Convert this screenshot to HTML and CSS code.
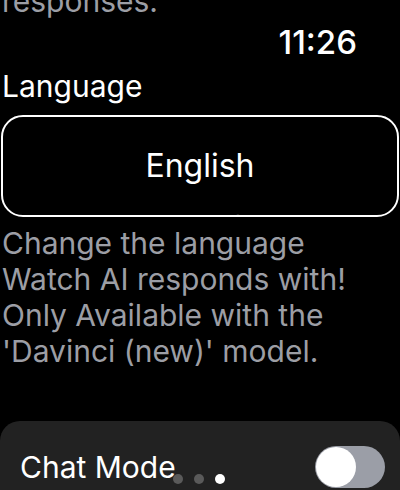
FILE: index.html
```html
<!DOCTYPE html>
<html>
<head>
<meta charset="utf-8">
<link rel="stylesheet" href="styles.css">
</head>
<body>
<div class="screen">
  <div class="prev">responses.</div>
  <div class="status"><span class="time">11:26</span></div>
  <div class="label">Language</div>
  <div class="picker">
    <div class="wheel-item faint top">Afrikaans</div>
    <div class="wheel-item current">English</div>
    <div class="wheel-item faint bottom">Français</div>
  </div>
  <div class="desc">Change the language Watch AI responds with! Only Available with the 'Davinci (new)' model.</div>
  <div class="card">
    <span class="card-label">Chat Mode</span>
    <span class="toggle"><span class="knob"></span></span>
  </div>
  <div class="dots">
    <span class="dot"></span><span class="dot"></span><span class="dot active"></span>
  </div>
</div>
</body>
</html>
```
FILE: styles.css
```css
html, body {
  margin: 0;
  padding: 0;
  background: #000;
}
.screen {
  position: relative;
  width: 400px;
  height: 490px;
  overflow: hidden;
  font-family: Inter, "Noto Sans", sans-serif;
  color: #fff;
}
.prev {
  margin-top: -16px;
  padding-left: 2px;
  font-size: 30px;
  line-height: 34px;
  color: #9c9ea5;
}
.status {
  display: flex;
  justify-content: flex-end;
  padding-right: 43px;
  margin-top: 6px;
}
.time {
  font-size: 33px;
  line-height: 36px;
  font-weight: 500;
}
.label {
  padding-left: 2px;
  margin-top: 8px;
  font-size: 30px;
  line-height: 36px;
}
.picker {
  position: relative;
  margin: 11px 1px 0;
  height: 98px;
  border: 2px solid #fff;
  border-radius: 22px;
  display: flex;
  align-items: center;
  justify-content: center;
  overflow: hidden;
}
.current {
  font-size: 32px;
  line-height: 38px;
}
.faint {
  position: absolute;
  left: 0;
  right: 0;
  text-align: center;
  color: #333;
  font-size: 28px;
  line-height: 34px;
}
.faint.top { top: -28px; }
.faint.bottom { bottom: -28px; }
.desc {
  margin-top: 8px;
  padding-left: 2px;
  padding-right: 40px;
  font-size: 30px;
  line-height: 36px;
  color: #9c9ea5;
}
.card {
  margin-top: 52px;
  height: 90px;
  background: #222222;
  border-radius: 20px;
  display: flex;
  align-items: flex-start;
  justify-content: space-between;
  padding: 24px 15px 0 20px;
  box-sizing: border-box;
}
.card-label {
  font-size: 30px;
  line-height: 44px;
}
.toggle {
  margin-top: 1px;
  width: 70px;
  height: 42px;
  border-radius: 21px;
  background: #9b9ea7;
  display: flex;
  align-items: center;
  padding-left: 1px;
  box-sizing: border-box;
}
.knob {
  width: 40px;
  height: 40px;
  border-radius: 50%;
  background: #fff;
}
.dots {
  position: absolute;
  left: 173px;
  top: 474px;
  display: flex;
  gap: 11px;
}
.dot {
  width: 10px;
  height: 10px;
  border-radius: 50%;
  background: #5a5a5a;
}
.dot.active {
  background: #fff;
}
```
